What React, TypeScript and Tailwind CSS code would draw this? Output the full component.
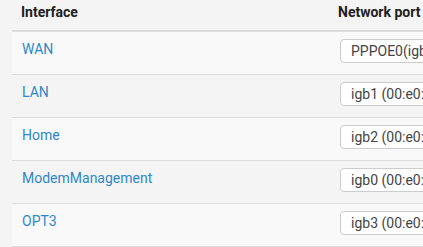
const rows = [
  { name: 'WAN', port: 'PPPOE0(igb0) - 00:e0:67:1d:c2:10' },
  { name: 'LAN', port: 'igb1 (00:e0:67:1d:c2:11)' },
  { name: 'Home', port: 'igb2 (00:e0:67:1d:c2:12)' },
  { name: 'ModemManagement', port: 'igb0 (00:e0:67:1d:c2:10)' },
  { name: 'OPT3', port: 'igb3 (00:e0:67:1d:c2:13)' },
]

export default function App() {
  return (
    <div className="h-[247px] w-[423px] overflow-hidden bg-[#f4f4f4] pl-[12px] font-['Roboto',sans-serif] text-[14px]">
      <div className="w-[600px]">
        <div className="flex h-[32px] border-b-2 border-[#dcdcdc] pt-[2px] font-bold leading-[20px] text-[#212121]">
          <div className="w-[319px] pl-[9px]">Interface</div>
          <div className="pl-[7px]">Network port</div>
        </div>
        {rows.map((row, i) => (
          <div
            key={row.name}
            className={
              'flex h-[43px] items-start border-b border-[#dcdcdc] pt-[7px] ' +
              (i % 2 === 0 ? 'bg-[#f9f9f9]' : 'bg-[#f4f4f4]')
            }
          >
            <div className="w-[319px] pl-[10px] leading-[20px]">
              <a href="#" className="text-[#2f87cc]">{row.name}</a>
            </div>
            <div className="pl-[9px]">
              <div className="h-[24px] w-[260px] overflow-hidden whitespace-nowrap rounded-[4px] border border-[#cccccc] bg-white pl-[10px] leading-[22px] text-[#444]">
                {row.port}
              </div>
            </div>
          </div>
        ))}
      </div>
    </div>
  )
}
